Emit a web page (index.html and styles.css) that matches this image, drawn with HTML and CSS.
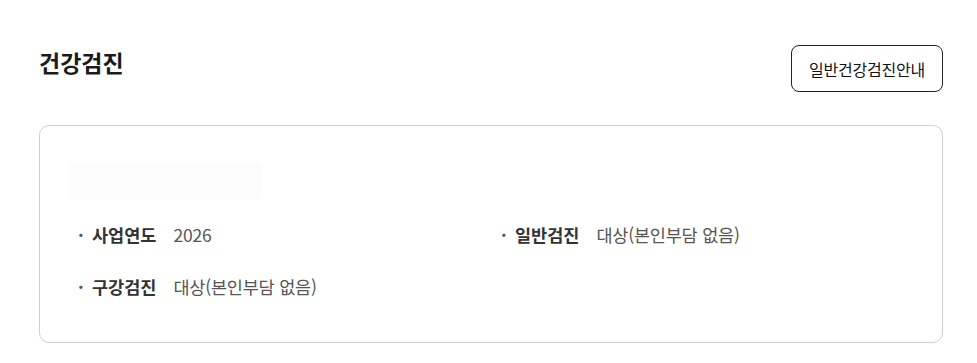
FILE: index.html
```html
<!DOCTYPE html>
<html lang="ko">
<head>
<meta charset="utf-8">
<title>건강검진</title>
<link rel="stylesheet" href="styles.css">
</head>
<body>
<div class="page">
  <div class="header">
    <h2 class="title">건강검진</h2>
    <button class="guide-btn" type="button">일반건강검진안내</button>
  </div>
  <div class="card">
    <div class="skeleton"></div>
    <ul class="info-list">
      <li class="info-item"><span class="bullet">·</span><span class="label">사업연도</span><span class="value">2026</span></li>
      <li class="info-item"><span class="bullet">·</span><span class="label">일반검진</span><span class="value">대상(본인부담 없음)</span></li>
      <li class="info-item"><span class="bullet">·</span><span class="label">구강검진</span><span class="value">대상(본인부담 없음)</span></li>
    </ul>
  </div>
</div>
</body>
</html>
```
FILE: styles.css
```css
* { box-sizing: border-box; }
html, body { margin: 0; padding: 0; background: #fff; }
body {
  font-family: "Noto Sans CJK KR", "Noto Sans", sans-serif;
  color: #222;
}
.page {
  padding: 45px 34px 0 39px;
}
.header {
  display: flex;
  justify-content: space-between;
  align-items: flex-start;
  height: 47px;
}
.title {
  margin: 0;
  margin-top: 1px;
  line-height: 32px;
  font-size: 23px;
  font-weight: 700;
  color: #1a1a1a;
}
.guide-btn {
  height: 47px;
  width: 152px;
  padding: 0;
  border: 1px solid #222;
  border-radius: 8px;
  background: #fff;
  font-family: inherit;
  font-size: 16px;
  letter-spacing: -0.2px;
  color: #111;
}
.card {
  margin-top: 33px;
  border: 1px solid #cfcfcf;
  border-radius: 10px;
  padding: 36px 28px 44px 28px;
}
.skeleton {
  width: 194px;
  height: 37px;
  background: #fcfcfc;
}
.info-list {
  list-style: none;
  margin: 23px 0 0;
  padding: 0;
  display: grid;
  grid-template-columns: 1fr 1fr;
  row-gap: 28px;
}
.info-item {
  display: flex;
  align-items: center;
  height: 24px;
  padding-left: 10px;
  font-size: 17.5px;
}
.bullet {
  width: 14px;
  color: #555;
  font-weight: 700;
}
.label {
  font-weight: 700;
  color: #333;
  margin-right: 17px;
}
.value {
  color: #555;
  letter-spacing: -0.2px;
}
```
